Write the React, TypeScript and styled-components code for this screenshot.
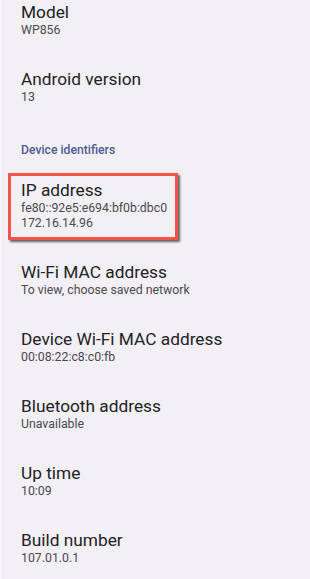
import styled, { createGlobalStyle } from 'styled-components';

const Global = createGlobalStyle`
  html, body {
    margin: 0;
    padding: 0;
    background: #f2f0f4;
  }
  body {
    font-family: Roboto, 'Noto Sans', sans-serif;
    overflow: hidden;
  }
`;

const Screen = styled.div`
  width: 310px;
  height: 579px;
  overflow: hidden;
  background: #f2f0f4;
  border-left: 1px solid #fbfafc;
  box-sizing: border-box;
`;

// list is scrolled a little, first row is cut at the top
const List = styled.div`
  margin-top: -13px;
  display: flex;
  flex-direction: column;
`;

const Item = styled.div`
  position: relative;
  padding: 14px 20px 16px;
  display: flex;
  flex-direction: column;
`;

const Title = styled.div`
  font-size: 17.3px;
  line-height: 22px;
  color: #232226;
`;

const Summary = styled.div`
  font-size: 12.3px;
  line-height: 15px;
  color: #4b4850;
`;

const Header = styled.div`
  padding: 21px 20px 7px;
  font-size: 12.2px;
  line-height: 16px;
  font-weight: 500;
  color: #4f5b92;
`;

const Highlight = styled.div`
  position: absolute;
  left: 7px;
  top: 8px;
  width: 170px;
  height: 67px;
  box-sizing: border-box;
  border: 3px solid #f4544a;
  box-shadow: 2px 2px 2px rgba(0, 0, 0, 0.6);
  pointer-events: none;
`;

type Row = { title: string; lines: string[]; marked?: boolean };

const top: Row[] = [
  { title: 'Model', lines: ['WP856'] },
  { title: 'Android version', lines: ['13'] },
];

const ids: Row[] = [
  { title: 'IP address', lines: ['fe80::92e5:e694:bf0b:dbc0', '172.16.14.96'], marked: true },
  { title: 'Wi-Fi MAC address', lines: ['To view, choose saved network'] },
  { title: 'Device Wi-Fi MAC address', lines: ['00:08:22:c8:c0:fb'] },
  { title: 'Bluetooth address', lines: ['Unavailable'] },
  { title: 'Up time', lines: ['10:09'] },
  { title: 'Build number', lines: ['107.01.0.1'] },
];

const Entry = ({ row }: { row: Row }) => (
  <Item>
    <Title>{row.title}</Title>
    {row.lines.map((l) => (
      <Summary key={l}>{l}</Summary>
    ))}
    {row.marked && <Highlight />}
  </Item>
);

export default function App() {
  return (
    <Screen>
      <Global />
      <List>
        {top.map((r) => (
          <Entry key={r.title} row={r} />
        ))}
        <Header>Device identifiers</Header>
        {ids.map((r) => (
          <Entry key={r.title} row={r} />
        ))}
      </List>
    </Screen>
  );
}
